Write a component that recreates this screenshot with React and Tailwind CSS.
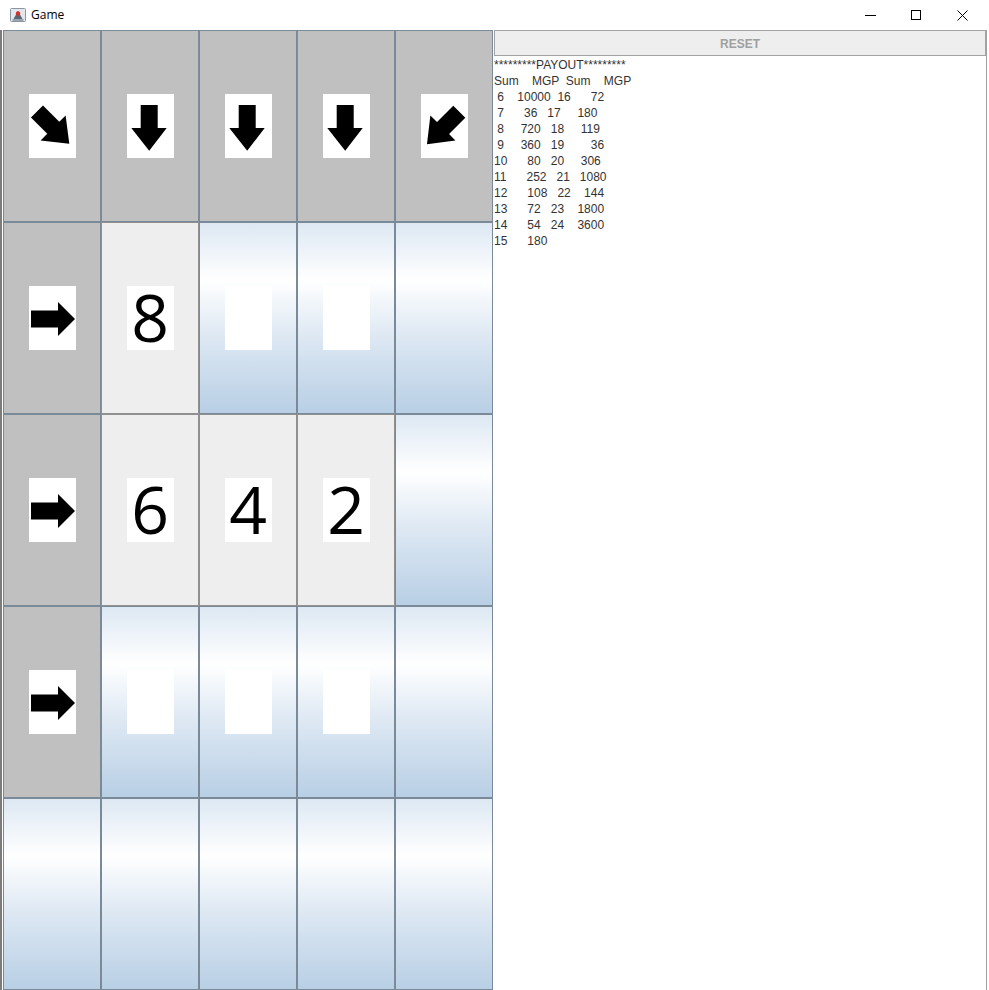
import React from 'react';

const GRADIENT =
  'bg-[linear-gradient(to_bottom,#dde8f3_0%,#ffffff_30%,#dde8f3_60%,#b8cfe5_100%)]';

const rows = [
  ['dr', 'd', 'd', 'd', 'dl'],
  ['r', 8, 'box', 'box', 'blank'],
  ['r', 6, 4, 2, 'blank'],
  ['r', 'box', 'box', 'box', 'blank'],
  ['blank', 'blank', 'blank', 'blank', 'blank'],
];

const payout = [
  '*********PAYOUT*********',
  'Sum    MGP  Sum    MGP',
  ' 6    10000  16      72',
  ' 7      36   17     180',
  ' 8     720   18     119',
  ' 9     360   19        36',
  '10      80   20     306',
  '11      252   21   1080',
  '12      108   22    144',
  '13      72   23    1800',
  '14      54   24    3600',
  '15      180',
];

// down arrow drawn in a 47x64 box, diagonals are rotations of it
const DOWN = '13.7,11 30.7,11 30.7,34 39.7,34 22.2,56.7 4.3,34 13.7,34';
const RIGHT = '2,24.5 29,24.5 29,16 46,33 29,50 29,41.5 2,41.5';
const turns = {
  d: '',
  dr: 'translate(2 0) rotate(-45 22 33.85)',
  dl: 'rotate(45 22 33.85)',
};

function Arrow({ dir }) {
  return (
    <svg width="47" height="64" viewBox="0 0 47 64">
      {dir === 'r' ? (
        <polygon points={RIGHT} fill="#000" />
      ) : (
        <polygon points={DOWN} fill="#000" transform={turns[dir]} />
      )}
    </svg>
  );
}

function Cell({ kind }) {
  if (typeof kind === 'number') {
    return (
      <div className="h-[192px] border border-[#909090] bg-[#eeeeee] flex items-center justify-center">
        <div className="w-[47px] h-[64px] bg-white flex items-center justify-center pb-1 overflow-visible">
          <span className="font-['Open_Sans',sans-serif] text-[66px] leading-none text-black">{kind}</span>
        </div>
      </div>
    );
  }
  if (kind === 'box' || kind === 'blank') {
    return (
      <div className={`h-[192px] border border-[#7a8a99] ${GRADIENT} flex items-center justify-center`}>
        {kind === 'box' && <div className="w-[47px] h-[64px] bg-white" />}
      </div>
    );
  }
  return (
    <div className="h-[192px] border border-[#7a8a99] bg-[#c0c0c0] flex items-center justify-center">
      <div className="w-[47px] h-[64px] bg-white">
        <Arrow dir={kind} />
      </div>
    </div>
  );
}

function TitleBar() {
  return (
    <div className="h-[30px] bg-white flex items-center">
      <svg width="16" height="16" viewBox="0 0 16 16" className="ml-[10px]">
        <rect x="0.5" y="1.5" width="15" height="13" rx="1" fill="#e4e8ec" stroke="#8a96a3" />
        <path d="M3.5 12 L8 4 L12.5 12 Z" fill="#5a6570" />
        <circle cx="8" cy="6.5" r="2.2" fill="#d8302a" />
        <rect x="2.5" y="12" width="11" height="2" fill="#9aa4ae" />
      </svg>
      <span className="ml-[5px] font-['Open_Sans',sans-serif] text-[12px] text-black">Game</span>
      <div className="flex-1" />
      <div className="w-[46px] h-[30px] flex items-center justify-center">
        <div className="w-[11px] h-px bg-black" />
      </div>
      <div className="w-[46px] h-[30px] flex items-center justify-center">
        <div className="w-[10px] h-[10px] border border-black" />
      </div>
      <div className="w-[46px] h-[30px] mr-[4px] flex items-center justify-center">
        <svg width="11" height="11" viewBox="0 0 11 11">
          <path d="M0.5 0.5 L10.5 10.5 M10.5 0.5 L0.5 10.5" stroke="#000" strokeWidth="1" />
        </svg>
      </div>
    </div>
  );
}

export default function App() {
  return (
    <div className="w-[989px] h-[990px] bg-white overflow-hidden">
      <TitleBar />
      <div className="flex h-[960px]">
        <div className="w-[2px] bg-[#7c7c7c]" />
        <div className="w-px bg-white" />
        <div className="w-[490px] grid grid-cols-5">
          {rows.map((row, i) => row.map((kind, j) => <Cell key={`${i}-${j}`} kind={kind} />))}
        </div>
        <div className="w-[494px] pl-px border-r border-[#a0a0a0] flex flex-col">
          <button
            disabled
            className="h-[26px] w-full border border-[#a3a3a3] bg-[#eeeeee] pt-px font-['Liberation_Sans',sans-serif] font-bold text-[12px] text-[#a0a0a0]"
          >
            RESET
          </button>
          <pre className="pt-px font-['Liberation_Sans',sans-serif] text-[12px] leading-[16px] text-[#333333] whitespace-pre">
            {payout.join('\n')}
          </pre>
        </div>
      </div>
    </div>
  );
}
